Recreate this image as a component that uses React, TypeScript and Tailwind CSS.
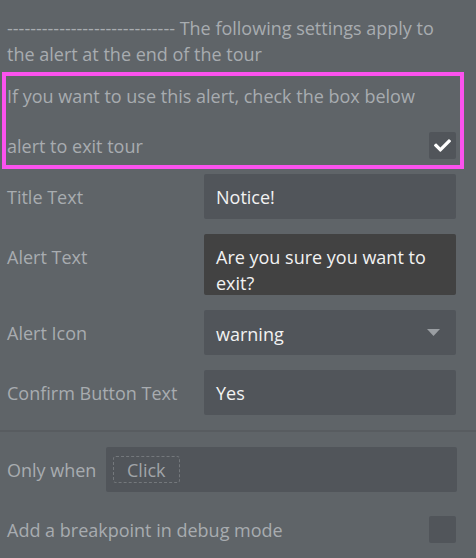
import { FaCheck } from "react-icons/fa";

const font = { fontFamily: '"Open Sans", "Noto Sans", sans-serif' };

function Field({ label, children, tall }: { label: string; children: React.ReactNode; tall?: boolean }) {
  return (
    <div className={`flex ${tall ? "items-start" : "items-center"} pl-[7px] pr-[20px]`}>
      <div className={`w-[197px] shrink-0 text-[#a8acb0] ${tall ? "pt-[10px]" : ""}`}>{label}</div>
      {children}
    </div>
  );
}

export default function App() {
  return (
    <div
      style={font}
      className="w-[476px] h-[558px] overflow-hidden bg-[#5f6468] text-[18px] leading-[26px]"
    >
      {/* section note */}
      <p className="pl-[7px] pr-[30px] pt-[15px] text-[#a8acb0]">
        ----------------------------- The following settings apply to the alert at the end of the tour
      </p>

      {/* highlighted checkbox block */}
      <div className="mt-[5px] ml-[2px] w-[462px] h-[97px] border-[4px] border-[#fc52ee] pl-[1px] pr-[4px] pt-[7px] text-[#a8acb0]">
        <div>If you want to use this alert, check the box below</div>
        <div className="mt-[23px] flex items-center justify-between">
          <span>alert to exit tour</span>
          <div className="w-[27px] h-[27px] rounded-[2px] bg-[#51555a] flex items-center justify-center">
            <FaCheck className="text-white w-[17px] h-[17px]" />
          </div>
        </div>
      </div>

      <div className="mt-[5px] flex flex-col gap-[15px]">
        <Field label="Title Text">
          <div className="w-[252px] h-[45px] rounded-[2px] bg-[#51555a] px-[12px] flex items-center text-[#f2f2f2]">
            Notice!
          </div>
        </Field>
        <Field label="Alert Text" tall>
          <div className="w-[252px] h-[61px] overflow-hidden rounded-[2px] bg-[#424242] px-[12px] pt-[10px] text-[#f2f2f2]">
            Are you sure you want to exit?
          </div>
        </Field>
        <Field label="Alert Icon">
          <div className="w-[252px] h-[45px] rounded-[2px] bg-[#51555a] pl-[12px] pr-[16px] pt-[3px] flex items-center justify-between text-[#f2f2f2]">
            <span>warning</span>
            <svg width="13" height="7" viewBox="0 0 13 7" className="-mt-[3px]">
              <path d="M0 0 L13 0 L6.5 7 Z" fill="#9a9ea2" />
            </svg>
          </div>
        </Field>
        <Field label="Confirm Button Text">
          <div className="w-[252px] h-[45px] rounded-[2px] bg-[#51555a] px-[12px] flex items-center text-[#f2f2f2]">
            Yes
          </div>
        </Field>
      </div>

      <div className="mt-[15px] h-[2px] bg-[#585c60]" />

      {/* condition */}
      <div className="mt-[15px] flex items-center pl-[7px] pr-[19px]">
        <span className="w-[99px] shrink-0 text-[#a8acb0]">Only when</span>
        <div className="flex-1 h-[45px] rounded-[2px] bg-[#51555a] pl-[7px] flex items-center">
          <span className="h-[27px] px-[13px] flex items-center rounded-[3px] border border-dashed border-[#74787c] text-[#a0a4a8]">
            Click
          </span>
        </div>
      </div>

      <div className="mt-[24px] flex items-center justify-between pl-[7px] pr-[20px]">
        <span className="text-[#a8acb0]">Add a breakpoint in debug mode</span>
        <div className="w-[27px] h-[27px] rounded-[2px] bg-[#51555a]" />
      </div>
    </div>
  );
}
